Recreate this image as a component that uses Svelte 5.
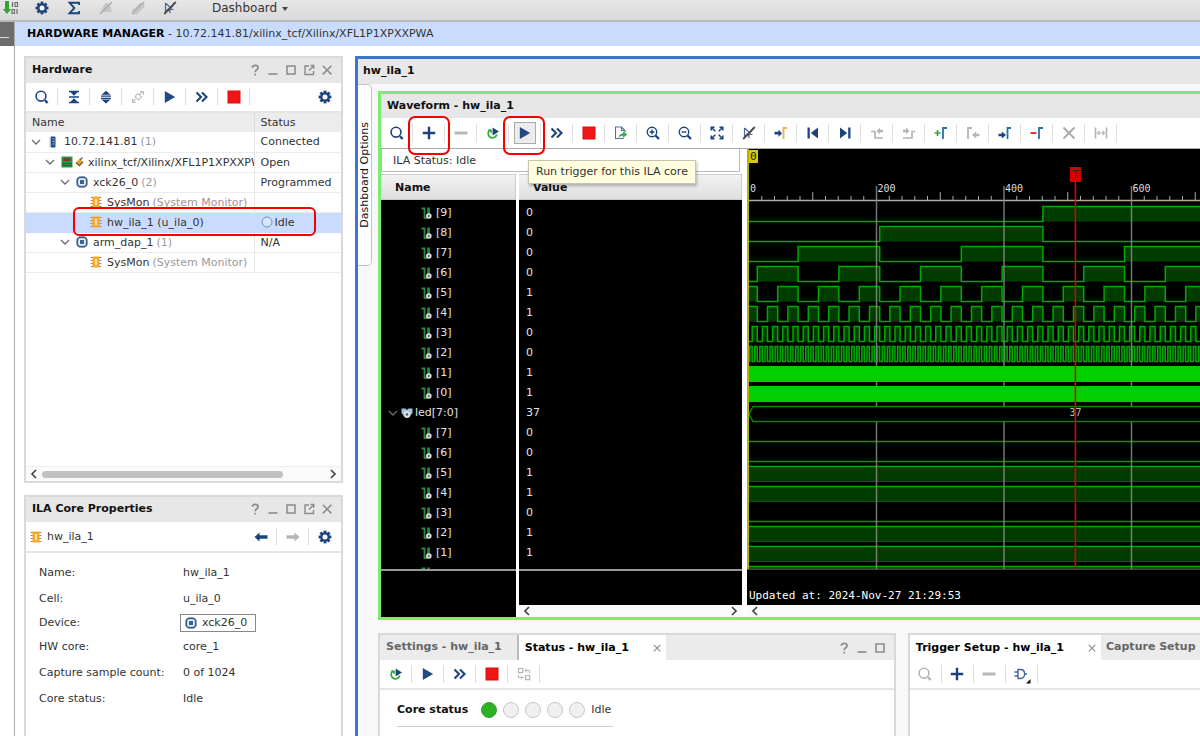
<script>
  const N = '#1c437c';
  const G = '#b5b5b5';
  const line = (d, c = N, w = 1.5) => `<path d="${d}" fill="none" stroke="${c}" stroke-width="${w}"/>`;
  const fill = (d, c = N) => `<path d="${d}" fill="${c}"/>`;
  const teeth = [0, 45, 90, 135].map((a) => `<rect x="6.6" y="1.6" width="2.8" height="12.8" transform="rotate(${a} 8 8)" fill="${N}"/>`).join('');
  const search = (c) => `<circle cx="7" cy="7.2" r="4.9" fill="none" stroke="${c}" stroke-width="1.6"/>` + line('M11 11.2L13.6 14', c, 2.4);
  const lens = `<circle cx="7" cy="7" r="4.7" fill="none" stroke="${N}" stroke-width="1.4"/>` + line('M10.6 10.6L14 14', N, 2.2);
  const cursorOff = (c, s) => line('M3.5 3v8.5l3-2.5 2 4M3.5 3l7 6.5H7.5M12 3L7 12', c, 1.2) + line('M13.8 2L2.2 14', s, 1.8);

  const icons = {
    program: fill('M2 1h4v8h2.2L4 14-.2 9H2z', '#35a335') + line('M9.500 2v5M12 2.500h2.500v4H12zM9 9.500h2.500v4H9zM14 9v5', '#6d6d6d', 1.200),
    gear: teeth + `<circle cx="8" cy="8" r="4.8" fill="${N}"/><circle cx="8" cy="8" r="2.5" fill="#fff"/>`,
    sigma: line('M13 5V2.8H3.6L8.4 8l-4.8 5.2H13V11', N, 1.9),
    bellOff: fill('M3 12h11L12 5 8 2.500 5.500 6z', '#c6c6c6') + line('M14 2L2 14', '#adadad', 1.6),
    clipOff: line('M4 10l6-6a2 2 0 0 1 3 3l-6 6a2.6 2.6 0 0 1-3.6-3.6M6 11l5-5', '#bdbdbd', 1.5) + line('M14 2L2 14', '#adadad', 1.500),
    cursorOff: cursorOff('#4a6a9a', '#4d4d4d'),
    search: search(N),
    searchOff: search(G),
    collapse: fill('M3 1.800h10v1.500H3zM4.500 3.300h7L8 6.800zM3 7.300h10v1.400H3zM3 12.700h10v1.500H3zM4.500 12.700h7L8 9.200z'),
    expand: fill('M8 1.800l4.600 4H3.400zM3 6.600h10v1.200H3zM3 8.700h10v1.200H3zM8 14.500l4.600-3.900H3.400z'),
    link: line('M5 7.500l3-3 3.500 3.500-3 3zM9.500 5.500L13 2.500M10 2.500h3.500V6M5.500 10L3 13M6 13.500H2.500V10', '#c0c0c0', 1.2),
    play: fill('M2.800 2L13.200 8l-10.400 6z', '#234a82'),
    ff: line('M2.500 3.500L7 8l-4.500 4.500M8 3.500L12.500 8 8 12.500', N, 2.1),
    stop: '<rect x="1.500" y="1.500" width="13" height="13" fill="#dc0c0c"/><rect x="2.500" y="2.500" width="11" height="11" fill="#f01616"/>',
    plus: line('M8 1.800v12.400M1.800 8h12.400', N, 2.4),
    minus: '<rect x="1.500" y="6.500" width="13" height="3" fill="#b8b8b8"/>',
    rerun: line('M5.200 4.700A4.400 4.400 0 1 0 11.800 9.500', '#2fa83c', 1.7) + fill('M2.600 4.400h4.200v4z', '#2fa83c') + fill('M7.600 2.600L14 6.600l-6.400 4z', N),
    export: line('M10 12.500V13.500H2.500V2h6l3.500 3.500v2M8.500 2v3.500H12', '#4b739f', 1.1) + fill('M5.500 13c.4-3.200 2-4.500 4.500-4.500V6.500L14.500 9.600 10 12.700v-2c-2 0-3.300.6-4.500 2.300z', '#2fb03c'),
    zoomIn: lens + line('M7 4.600v4.800M4.600 7h4.800', N, 1.4),
    zoomOut: lens + line('M4.600 7h4.800', N, 1.4),
    fit: line('M2.200 5.500V2.200h3.300M10.500 2.200h3.300v3.300M13.800 10.500v3.300h-3.300M5.500 13.800H2.200v-3.300M2.500 2.500l3.800 3.800M13.500 2.500L9.700 6.300M13.500 13.500L9.700 9.700M2.500 13.500l3.800-3.800', N, 1.5),
    toTrigger: fill('M1.500 6.800h4V4.500L9 8.200l-3.500 3.700V9.600h-4z') + line('M10.500 14V3H14', '#e3b65c', 1.900),
    first: fill('M2.500 2.500h2.300v11H2.500zM13 2.500v11L5.800 8z'),
    last: fill('M13.500 2.500h-2.300v11h2.300zM3 2.500v11L10.200 8z'),
    prevEdge: line('M2 6.500h4V13h8', G, 1.7) + fill('M14 4.800h-3V2.800L7.500 6 11 9.200v-2h3z', G),
    nextEdge: line('M14 6.500h-3V13H2', G, 1.7) + fill('M2 4.800h3V2.800L8.500 6 5 9.200v-2H2z', G),
    addMark: line('M4.500 5v6M1.500 8h6', '#2fa83c', 1.600) + line('M10 14V3h4', '#2a6fa5', 1.800),
    prevMark: line('M3 14V3h4', G, 1.800) + fill('M14.500 8.700h-3.300V6.500L7 10l4.200 3.500v-2.200h3.300z', G),
    nextMark: line('M10.500 14V3H14', '#2a6fa5', 1.800) + fill('M1.500 8.700h3.300V6.500L9 10l-4.200 3.500v-2.200H1.500z'),
    delMark: line('M1.500 8h6', '#e81c1c', 1.800) + line('M10 14V3h4', '#2a6fa5', 1.800),
    cross: line('M2.500 2.500l11 11M13.500 2.500l-11 11', '#a9a9a9', 1.800),
    span: line('M2.500 2.500v11M13.500 2.500v11', G, 1.700) + line('M4.500 8h7M6.500 6l-2 2 2 2M9.500 6l2 2-2 2', G, 1.100),
    swap: line('M2.500 2.500h4.200v4.200H2.500zM9.500 9.500h4.200v4.200H9.500z', G, 1.200) + line('M9 4.500h4.500V7M11 2.500l-2 2 2 2M7 11.500H2.500V9M5 9.500l2 2-2 2', G, 1),
    gate: line('M5 3.500h2.500C13 3.500 13 12.500 7.500 12.500H5zM1.500 6H5M1.500 10H5M11.500 8H14', '#3f62a0', 1.400) + fill('M17.500 13v4.500h-4.500z', '#111'),
    back: fill('M1.500 8l5-4.500v2.700h8v3.600h-8v2.700z'),
    forward: fill('M14.500 8l-5-4.500v2.700h-8v3.600h8v2.700z', G),
    host: '<rect x="5.500" y="2.500" width="5" height="11" rx="1" fill="#20507f"/><rect x="4.500" y="2.500" width="1.200" height="11" fill="#b9cbe0"/>' + line('M7.500 5H9.500M7.500 7.500H9.500M7.500 10H9.500', '#9fc3e6', 1),
    board: '<rect x="2.500" y="2.500" width="11" height="11" fill="#2d9345"/><rect x="4.500" y="4" width="7" height="3" fill="#7c3a35"/>' + line('M3 9.500h10M3 11.500h10', '#1a6130', 1),
    plug: fill('M5 8.500l3.500-3.800L12 8l-3.700 3.700z', '#eba32f') + line('M5 8.500l3.300 3.200L12 8', '#6e5425', 1.200) + line('M9 6l2.500-2.500', '#555', 1.300),
    chip: '<rect x="3.500" y="3.500" width="9" height="9" rx="2.500" fill="#e6eef8" stroke="#3c6291" stroke-width="1.400"/>' + line('M6 2v1.500M8 2v1.500M10 2v1.500M6 12.500V14M8 12.500V14M10 12.500V14M2 6h1.500M2 8h1.500M2 10h1.500M12.500 6H14M12.500 8H14M12.500 10H14', '#3c6291', 1) + '<rect x="6" y="6" width="4" height="4" fill="#3c6291"/>',
    core: line('M2.500 3.500h11M2.500 6.500h11M2.500 9.500h11M2.500 12.500h11', '#8d8d8d', 1) + '<rect x="4.500" y="2.500" width="7" height="11" fill="#fca726"/><rect x="7" y="5" width="2" height="6" fill="#ffe6bd"/>',
    idle: '<circle cx="8" cy="8" r="5" fill="#d7e5fb" stroke="#6f93bd" stroke-width="1"/>',
    bit: line('M2.500 3.500h3v9.500h2.500', '#2c8a3c', 1.800) + line('M9.600 2.500v7', '#2c8a3c', 2.600) + '<circle cx="9.800" cy="11" r="2.800" fill="#dcdcdc"/><circle cx="9.800" cy="11" r="1" fill="#555"/>',
    bus: fill('M2.500 3.500h4L8 5l1.500-1.500h4V8l-3 3.500h-5l-3-3.500z', '#9cc4e4') + '<circle cx="8" cy="9.500" r="3.400" fill="#dcdcdc"/><circle cx="8" cy="9.500" r="1.200" fill="#555"/>',
    chevron: line('M4 6l4 4 4-4', '#6b6b6b', 1.300),
    left: line('M10 4L6 8l4 4', '#444', 1.700),
    right: line('M6 4l4 4-4 4', '#444', 1.700),
    help: line('M5.300 5.700C5.300 2.600 11 2.700 11 5.700 11 7.800 8.200 7.700 8.200 10.200M8.200 11.800v1.800', '#8b8b8b', 1.700),
    min: line('M3.500 12h9', '#8b8b8b', 1.600),
    max: '<rect x="4" y="4" width="8" height="8" fill="none" stroke="#8b8b8b" stroke-width="1.500"/>',
    float: line('M8 4H4v8.500h8.500V9', '#8b8b8b', 1.400) + line('M8 8.500L12 4.500M9.500 3.500h3.300V7', '#8b8b8b', 1.300),
    close: line('M3.800 3.800l8.600 8.600M12.400 3.800l-8.600 8.600', '#8b8b8b', 1.500),
  };

  const topTools = [['program', 'Program device'], ['gear', 'Settings'], ['sigma', 'Report'], ['bellOff', 'Mute'], ['clipOff', 'Detach'], ['cursorOff', 'Deselect']];
  const hwTools = [['search', 'Search'], ['collapse', 'Collapse all'], ['expand', 'Expand all'], ['link', 'Auto connect'], ['play', 'Run trigger'], ['ff', 'Run immediate'], ['stop', 'Stop trigger']];
  const waveTools = [
    ['search', 'Search'], ['plus', 'Add probes', 'mark'], ['minus', 'Remove'], ['rerun', 'Auto re-trigger'], ['play', 'Run trigger', 'mark hot'],
    ['ff', 'Run immediate'], ['stop', 'Stop trigger'], ['export', 'Export data'], ['zoomIn', 'Zoom in'], ['zoomOut', 'Zoom out'], ['fit', 'Zoom fit'],
    ['cursorOff', 'Deselect'], ['toTrigger', 'Go to trigger'], ['first', 'Go to start'], ['last', 'Go to end'], ['prevEdge', 'Previous transition'],
    ['nextEdge', 'Next transition'], ['addMark', 'Add marker'], ['prevMark', 'Previous marker'], ['nextMark', 'Next marker'], ['delMark', 'Delete marker'],
    ['cross', 'Delete all'], ['span', 'Fit span'],
  ];
  const statusTools = [['rerun', 'Auto re-trigger'], ['play', 'Run trigger'], ['ff', 'Run immediate'], ['stop', 'Stop trigger'], ['swap', 'Swap']];
  const triggerTools = [['searchOff', 'Search'], ['plus', 'Add probe'], ['minus', 'Remove probe'], ['gate', 'Trigger condition']];
  const windowTools = [['help', 'Help'], ['min', 'Minimize'], ['max', 'Maximize'], ['float', 'Float'], ['close', 'Close']];

  const tree = [
    { level: 0, open: true, icons: ['host'], name: '10.72.141.81', note: '(1)', status: 'Connected' },
    { level: 1, open: true, icons: ['board', 'plug'], name: 'xilinx_tcf/Xilinx/XFL1P1XPXXPWA', status: 'Open' },
    { level: 2, open: true, icons: ['chip'], name: 'xck26_0', note: '(2)', status: 'Programmed' },
    { level: 3, icons: ['core'], name: 'SysMon', note: '(System Monitor)', status: '' },
    { level: 3, icons: ['core'], name: 'hw_ila_1 (u_ila_0)', status: 'Idle', selected: true },
    { level: 2, open: true, icons: ['chip'], name: 'arm_dap_1', note: '(1)', status: 'N/A' },
    { level: 3, icons: ['core'], name: 'SysMon', note: '(System Monitor)', status: '' },
  ];
  const props = [['Name:', 'hw_ila_1'], ['Cell:', 'u_ila_0'], ['Device:', 'xck26_0'], ['HW core:', 'core_1'], ['Capture sample count:', '0 of 1024'], ['Core status:', 'Idle']];

  const counterBits = [0, 0, 0, 0, 1, 1, 0, 0, 1, 1].map((v, i) => ({ name: `[${9 - i}]`, value: v, bit: 9 - i }));
  const ledBits = [0, 0, 1, 1, 0, 1, 1, 1].map((v, i) => ({ name: `[${7 - i}]`, value: v, level: v }));
  const signals = [...counterBits, { name: 'led[7:0]', value: 37, bus: true }, ...ledBits.slice(0, 7), { value: '', name: '' }];

  const SCALE = 0.6375;
  const SAMPLES = 1024;
  const START = 51;
  const X0 = 2;
  const xAt = (s) => +(X0 + s * SCALE).toFixed(2);
  const yAt = (row) => 57.5 + row * 20;
  const xEnd = xAt(SAMPLES);

  function trace(bit, row) {
    const top = yAt(row);
    const low = top + 15;
    let level = (START >> bit) & 1;
    let d = `M${X0} ${level ? top : low}`;
    let area = level ? `M${X0} ${low}V${top}` : '';
    for (let s = 1; s <= SAMPLES; s++) {
      const next = s === SAMPLES ? -1 : ((START + s) >> bit) & 1;
      if (next === level) continue;
      const x = xAt(s);
      d += `H${x}`;
      if (level) area += `H${x}V${low}Z`;
      if (next < 0) break;
      d += `V${next ? top : low}`;
      if (next) area += `M${x} ${low}V${top}`;
      level = next;
    }
    return { d, area };
  }
  const traces = [9, 8, 7, 6, 5, 4, 3, 2].map((bit, row) => trace(bit, row));
  const ticks = Array.from({ length: 51 }, (_, i) => (i + 1) * 20);
  const majors = [200, 400, 600, 800, 1000];
</script>

{#snippet icon(name)}
  <svg class="icon" viewBox="0 0 16 16" aria-hidden="true">{@html icons[name]}</svg>
{/snippet}

{#snippet toolbar(items)}
  {#each items as [name, label, extra]}
    <div class="cell"><button class={['tool', extra]} aria-label={label}>{@render icon(name)}</button></div>
  {/each}
{/snippet}

{#snippet winButtons(items)}
  <div class="winbtns">
    {#each items as [name, label]}<button aria-label={label}>{@render icon(name)}</button>{/each}
  </div>
{/snippet}

<div class="app">
  <header class="topbar">
    {#each topTools as [name, label]}<button class="toptool" aria-label={label}>{@render icon(name)}</button>{/each}
    <button class="menu">Dashboard <span class="caret"></span></button>
  </header>

  <div class="shell">
    <div class="rail"><button aria-label="Collapse navigator"></button></div>
    <main>
      <h1><b>HARDWARE MANAGER</b> - 10.72.141.81/xilinx_tcf/Xilinx/XFL1P1XPXXPWA</h1>
      <div class="columns">
        <aside>
          <section class="panel hardware">
            <div class="title"><h2>Hardware</h2>{@render winButtons(windowTools)}</div>
            <div class="toolbar">
              {@render toolbar(hwTools)}
              <button class="tool settings" aria-label="Hardware settings">{@render icon('gear')}</button>
            </div>
            <div class="treebox">
              <table>
                <thead><tr><th class="namecol">Name</th><th>Status</th></tr></thead>
                <tbody>
                  {#each tree as row}
                    <tr class:selected={row.selected}>
                      <td>
                        <div class={['node', `l${row.level}`]}>
                          {#if row.open}<button class="twist" aria-label="Toggle {row.name}">{@render icon('chevron')}</button>{/if}
                          {#each row.icons as ic}{@render icon(ic)}{/each}
                          <span>{row.name}</span>
                          {#if row.note}<span class="note">{row.note}</span>{/if}
                        </div>
                      </td>
                      <td>
                        <div class="state">{#if row.selected}{@render icon('idle')}{/if}{row.status}</div>
                      </td>
                    </tr>
                  {/each}
                </tbody>
              </table>
            </div>
            <div class="scroll">{@render icon('left')}<div class="track"><div class="thumb"></div></div>{@render icon('right')}</div>
          </section>

          <section class="panel properties">
            <div class="title"><h2>ILA Core Properties</h2>{@render winButtons(windowTools)}</div>
            <div class="toolbar">
              <span class="object">{@render icon('core')}hw_ila_1</span>
              <div class="cell"><button class="tool" aria-label="Back">{@render icon('back')}</button></div>
              <div class="cell"><button class="tool" aria-label="Forward">{@render icon('forward')}</button></div>
              <button class="tool" aria-label="Properties settings">{@render icon('gear')}</button>
            </div>
            <dl>
              {#each props as [key, value]}
                <dt>{key}</dt>
                <dd>{#if key === 'Device:'}<button class="device">{@render icon('chip')}{value}</button>{:else}{value}{/if}</dd>
              {/each}
            </dl>
          </section>
        </aside>

        <section class="dashboard">
          <div class="title"><h2>hw_ila_1</h2></div>
          <div class="dashbody">
            <button class="sidetab"><span>Dashboard Options</span></button>
            <div class="work">
              <section class="waveform">
                <div class="title"><h2>Waveform - hw_ila_1</h2></div>
                <div class="toolbar">
                  {@render toolbar(waveTools)}
                  <div class="tip" role="tooltip">Run trigger for this ILA core</div>
                </div>
                <div class="viewer">
                  <div class="lists">
                    <div class="ilastatus">ILA Status: Idle</div>
                    <div class="names">
                      <div class="colhead">Name</div>
                      <div class="rows">
                        {#each signals as s}
                          <div class={['row', s.bus && 'busrow']}>
                            {#if s.bus}{@render icon('chevron')}{/if}
                            {@render icon(s.bus ? 'bus' : 'bit')}<span>{s.name}</span>
                          </div>
                        {/each}
                      </div>
                      <div class="foot"></div>
                    </div>
                    <div class="values">
                      <div class="colhead">Value</div>
                      <div class="rows">
                        {#each signals as s}<div class="row">{s.value}</div>{/each}
                      </div>
                      <div class="foot"></div>
                      <div class="hbar">{@render icon('left')}{@render icon('right')}</div>
                    </div>
                  </div>
                  <div class="plot">
                    <div class="canvas">
                      <svg class="wave" width="660" height="456" role="img" aria-label="Captured signals">
                        <path d="M0 51.5H{xEnd}" stroke="#aaa" stroke-width="1.500" />
                        {#each ticks as t}
                          {#if t % 200}<path d="M{xAt(t)} 51v{t % 100 ? -4 : -8}" stroke="#aaa" />{/if}
                        {/each}
                        <path d="M0 420H{xEnd}" stroke="#8c8c8c" />
                        {#each traces as t}
                          <path d={t.area} fill="#003c00" />
                          <path d={t.d} fill="none" stroke="#00a800" stroke-width="1.500" />
                        {/each}
                        {#each ledBits as s, i}
                          {#if s.level}
                            <rect x={X0} y={yAt(i + 11)} width={xEnd - X0} height={i === 7 ? 2 : 15} fill="#003c00" />
                            <path d="M{X0} {yAt(i + 11)}H{xEnd}" stroke="#00a800" stroke-width="1.500" />
                            {#if i < 7}<path d="M{X0} {yAt(i + 11) + 15}H{xEnd}" stroke="#005a00" />{/if}
                          {:else}
                            <path d="M{X0} {yAt(i + 11) + 15}H{xEnd}" stroke="#009a00" stroke-width="1.500" />
                          {/if}
                        {/each}
                        {#each majors as m}
                          <path d="M{xAt(m)} 37V420" stroke="#8a8a8a" stroke-width="1.500" opacity="0.85" />
                          <text x={xAt(m) + 1} y="43">{m}</text>
                        {/each}
                        <text x="3" y="43">0</text>
                        <rect x={X0} y="217" width={xEnd - X0} height="16" fill="#00cf00" />
                        <rect x={X0} y="237" width={xEnd - X0} height="16" fill="#00cf00" />
                        <path d="M{xEnd} 257.5H6L2 265l4 7.500H{xEnd}" fill="#000" stroke="#008800" stroke-width="1.500" />
                        <text class="busval" x={xAt(512)} y="267" text-anchor="middle">37</text>
                        <path d="M1 0V420" stroke="#b8b000" stroke-width="2" />
                        <rect x="2" y="1" width="9" height="13" fill="#d2cc00" />
                        <text class="flag" x="3" y="11">0</text>
                        <path d="M{xAt(512)} 20V420" stroke="#e00000" stroke-width="1.500" />
                        <rect x={xAt(512) - 5.5} y="18" width="11" height="15" fill="#d60000" />
                        <text class="flag" x={xAt(512)} y="29" text-anchor="middle">T</text>
                        <text class="updated" x="2" y="450">Updated at: 2024-Nov-27 21:29:53</text>
                      </svg>
                    </div>
                    <div class="hbar">{@render icon('left')}</div>
                  </div>
                </div>
              </section>

              <div class="docks">
                <section class="panel status">
                  <div class="tabs">
                    <button class="tab">Settings - hw_ila_1</button>
                    <button class="tab active">Status - hw_ila_1 <span class="x">{@render icon('close')}</span></button>
                    {@render winButtons(windowTools.slice(0, 3))}
                  </div>
                  <div class="toolbar">{@render toolbar(statusTools)}</div>
                  <div class="core">
                    <b>Core status</b>
                    <span class="lamp on"></span><span class="lamp"></span><span class="lamp"></span><span class="lamp"></span><span class="lamp"></span>
                    <span class="coretext">Idle</span>
                  </div>
                </section>
                <section class="panel trigger">
                  <div class="tabs">
                    <button class="tab active">Trigger Setup - hw_ila_1 <span class="x">{@render icon('close')}</span></button>
                    <button class="tab next">Capture Setup</button>
                  </div>
                  <div class="toolbar">{@render toolbar(triggerTools)}</div>
                </section>
              </div>
            </div>
          </div>
        </section>
      </div>
    </main>
  </div>
</div>

<style>
  :global(body) { margin: 0; overflow: hidden; }
  .app, .app *, .app *::before, .app *::after { box-sizing: border-box; }
  .app {
    display: flex; flex-direction: column; height: 100vh; min-height: 736px; overflow: hidden;
    background: #fff; color: #333; font: 11px/20px "DejaVu Sans", sans-serif; white-space: nowrap;
  }
  button { border: 0; padding: 0; margin: 0; background: none; font: inherit; color: inherit; display: flex; align-items: center; justify-content: center; }
  h1, h2, dl, dd { margin: 0; font-size: inherit; }
  .icon { width: 16px; height: 16px; flex: none; overflow: visible; display: block; }

  .topbar { display: flex; align-items: center; height: 22px; padding: 0 0 5px; flex: none; background: linear-gradient(#e6e6e6, #dadada); border-bottom: 2px solid #b9b9b9; }
  .toptool { width: 32px; }
  .toptool:first-child { width: 26px; padding-right: 4px; }
  .menu { margin-left: 26px; gap: 5px; font-size: 12px; }
  .caret { border: 3px solid transparent; border-top: 4px solid #444; border-bottom: 0; margin-top: 2px; }

  .shell { display: flex; flex: 1; min-height: 0; }
  .rail { width: 15px; border-right: 1px solid #aaa; flex: none; }
  .rail button { width: 14px; height: 24px; background: #6c6c6c; align-items: flex-end; justify-content: flex-start; padding-bottom: 8px; }
  .rail button::after { content: ""; width: 9px; height: 1px; background: #ddd; }
  main { flex: 1; min-width: 0; display: flex; flex-direction: column; }
  h1 { height: 24px; flex: none; padding-left: 12px; background: #cadcfd; font-weight: 400; line-height: 23px; }
  h1 b { color: #000; }
  .columns { flex: 1; min-height: 0; display: flex; gap: 12px; padding: 10px 0 0 9px; }
  aside { width: 319px; flex: none; display: flex; flex-direction: column; gap: 12px; }

  .panel { border: 2px solid #d9d9d9; background: #fff; display: flex; flex-direction: column; }
  .title { display: flex; align-items: center; justify-content: space-between; height: 25px; flex: none; padding: 0 5px 2px 6px; background: #e7e7e7; color: #111; }
  .title h2 { font-weight: 700; line-height: 23px; }
  .winbtns { display: flex; }
  .winbtns button { width: 18px; height: 20px; }
  .toolbar { display: flex; align-items: center; height: 30px; flex: none; border-bottom: 2px solid #e5e5e5; position: relative; background: #fff; }
  .cell { width: 32px; height: 18px; flex: none; border-right: 1px solid #dedede; display: flex; align-items: center; justify-content: center; }
  .tool { width: 22px; height: 22px; flex: none; position: relative; }
  .settings { margin-left: auto; }
  .hardware .toolbar, .properties .toolbar { padding-right: 5px; }

  .hardware { height: 427px; flex: none; }
  .treebox { flex: 1; overflow: visible; min-height: 0; }
  table { width: 100%; border-collapse: collapse; table-layout: fixed; }
  th { height: 19px; padding: 0 0 0 6px; background: #ececec; text-align: left; font-weight: 400; line-height: 19px; border-right: 1px solid #dcdcdc; }
  th:last-child, td:last-child { border-right: 0; }
  .namecol { width: 228px; }
  td { height: 20px; padding: 0; border-right: 1px solid #e4e4e4; border-bottom: 1px solid #ececec; line-height: 19px; }
  .node { display: flex; align-items: center; overflow: hidden; height: 19px; }
  .node span { padding-left: 3px; }
  .node .note { color: #999; }
  .twist { width: 16px; margin-right: 1px; }
  .l0 { padding-left: 2px; }
  .l1 { padding-left: 16px; }
  .l1 .icon + .icon { margin: 0 -2px 0 -4px; }
  .l2 { padding-left: 31px; }
  .l3 { padding-left: 62px; }
  .state { display: flex; align-items: center; padding-left: 6px; height: 19px; }
  .state .icon { margin-left: -2px; width: 16px; }
  .selected td { background: #cadcfd; border-color: #cadcfd; }
  .selected { position: relative; }
  .selected td:first-child::after { content: ""; position: absolute; left: 47px; top: -5px; width: 243px; height: 29px; border: 2px solid #f40000; border-radius: 6px; z-index: 2; }
  .scroll { display: flex; align-items: center; height: 15px; flex: none; border-top: 1px solid #eee; background: #fafafa; }
  .track { flex: 1; }
  .thumb { width: 85%; height: 7px; border-radius: 4px; background: #c1c1c1; }

  .properties { flex: 1; border-bottom: 0; }
  .properties .toolbar { height: 31px; }
  .object { display: flex; align-items: center; gap: 3px; margin: 0 auto 0 2px; }
  .properties .toolbar > .tool { margin-left: 5px; }
  dl { display: grid; grid-template-columns: 144px 1fr; grid-template-rows: 26px 26px 22px 26px 26px 26px; align-items: center; padding: 7px 13px; }
  .device { height: 18px; margin-left: -3px; padding: 0 8px 0 2px; border: 1px solid #888; gap: 3px; }

  .dashboard { flex: 1; min-width: 0; display: flex; flex-direction: column; border: 3px solid #3b76cf; border-width: 3px 0 0 3px; background: #f8f8f8; }
  .dashboard > .title { padding-left: 5px; }
  .dashbody { flex: 1; min-height: 0; display: flex; }
  .sidetab { width: 14px; height: 182px; flex: none; border: 1px solid #c4c4c4; border-left: 0; border-radius: 0 5px 5px 0; background: #fff; color: #111; justify-content: center; }
  .sidetab span { writing-mode: vertical-rl; transform: rotate(180deg); line-height: 14px; }
  .work { flex: 1; min-width: 0; display: flex; flex-direction: column; gap: 13px; padding: 7px 0 0 6px; }

  .waveform { border: 3px solid #7bec70; border-right: 0; background: #fff; flex: none; }
  .waveform .title { height: 24px; }
  .waveform .toolbar { height: 31px; border-bottom: 1px solid #aaa; }
  .mark::after { content: ""; position: absolute; left: -10px; top: -6px; width: 42px; height: 39px; border: 2px solid #f40000; border-radius: 7px; z-index: 3; }
  .hot { border: 1px solid #aaa; background: #ececec; }
  .hot::after { left: -12px; top: -7px; }
  .tip { position: absolute; left: 147px; top: 42px; height: 24px; padding: 0 7px; border: 1px solid #c4c4b0; background: #ffffdf; line-height: 22px; z-index: 4; box-shadow: 1px 2px 3px #0004; }
  .viewer { display: flex; }
  .lists { width: 361px; flex: none; display: grid; grid-template-columns: 135px 1fr; gap: 2px 3px; }
  .ilastatus { grid-column: 1 / -1; height: 23px; margin-right: 2px; border: 1px solid #bbb; border-top: 0; padding-left: 11px; line-height: 24px; }
  .names, .values { display: flex; flex-direction: column; background: #000; color: #e4e4e4; }
  .colhead { height: 26px; flex: none; padding-left: 14px; border: 1px solid #ccc; border-left: 0; background: linear-gradient(#f2f2f2, #dfdfdf); color: #111; font-weight: 700; line-height: 25px; }
  .rows { height: 369px; overflow: hidden; padding-top: 3px; }
  .row { height: 20px; display: flex; align-items: center; }
  .names .row { padding-left: 38px; gap: 1px; }
  .names .busrow { padding-left: 4px; gap: 0; }
  .busrow .icon + .icon { margin-left: -2px; }
  .values .row { padding-left: 7px; }
  .foot { border-top: 2px solid #999; flex: 1; min-height: 36px; }
  .hbar { display: flex; align-items: center; justify-content: space-between; height: 12px; background: #fafafa; }
  .plot { flex: 1; min-width: 0; margin-left: 5px; }
  .canvas { background: #000; overflow: hidden; height: 456px; }
  .wave { display: block; }
  .wave text { font: 10px "DejaVu Sans Mono", monospace; fill: #ddd; }
  .wave .updated { font-size: 11px; fill: #fff; }
  .wave .flag { font-size: 11px; fill: #222; }
  .wave .busval { fill: #bbb; }

  .docks { flex: 1; min-height: 0; display: flex; gap: 12px; }
  .docks .panel { border-bottom: 0; min-width: 0; }
  .status { width: 63%; flex: none; }
  .trigger { flex: 1; border-right: 0; overflow: hidden; }
  .tabs { display: flex; height: 25px; flex: none; background: #ebebeb; }
  .tab { height: 24px; flex: none; padding: 0 15px 0 6px; font-weight: 700; color: #666; }
  .tab.active { height: 25px; padding: 0 0 0 6px; background: #fff; color: #000; }
  .tab + .tab.active { border-left: 2px solid #bbb; }
  .tab.next { padding-left: 5px; }
  .x { padding-left: 22px; }
  .x .icon { width: 12px; height: 12px; margin-right: 3px; }
  .tabs .winbtns { margin-left: auto; align-items: center; padding-right: 5px; }
  .core { display: flex; align-items: center; gap: 6px; width: 216px; height: 37px; padding-top: 3px; margin-left: 17px; border-bottom: 1px solid #ccc; }
  .core b { color: #111; margin-right: 7px; }
  .lamp { width: 16px; height: 16px; flex: none; border: 1px solid #c6c6c6; border-radius: 50%; background: #f0f0f0; }
  .lamp.on { background: #2eb024; border-color: #3a9c33; }
</style>
